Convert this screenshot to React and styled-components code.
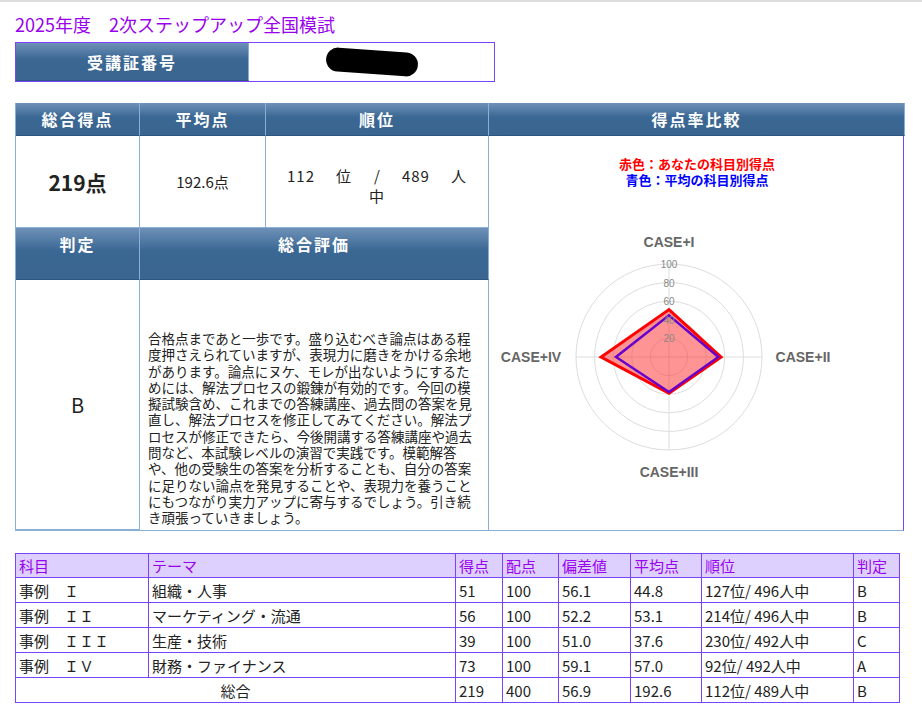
import React from "react";
import styled, { createGlobalStyle } from "styled-components";

const G = createGlobalStyle`
  body { margin: 0; background: #fff; font-family: "Noto Sans CJK JP", "Liberation Sans", sans-serif; }
`;
const Page = styled.div`
  padding: 10px 15px 0 15px; border-top: 2px solid #ddd; width: 892px;
`;
const Title = styled.h1`
  margin: 0 0 6px 0; font-size: 18px; font-weight: normal; color: #9900ee; line-height: 24px;
`;
const IdBar = styled.div`
  display: grid; grid-template-columns: 233px 246px; width: 480px; height: 40px;
  border: 1px solid #7a44ff; box-sizing: border-box;
`;
const HeadCell = styled.div`
  background: linear-gradient(#6e91b8, #3a6793 45%, #3a6590);
  color: #fff; font-weight: bold; font-size: 16px; letter-spacing: 2px;
  display: flex; justify-content: center; align-items: ${p => p.$top ? "flex-start" : "center"};
  padding-top: ${p => p.$top ? "4px" : "0"};
  border-right: 1px solid #8ab0d8; border-bottom: 1px solid #2d5580;
`;
const Blot = styled.div`
  display: flex; align-items: center; justify-content: center;
  & > span { width: 92px; height: 24px; background: #000; border-radius: 12px; transform: rotate(4deg); display: block; }
`;
const Main = styled.div`
  margin-top: 21px; display: grid; width: 889px; box-sizing: border-box;
  grid-template-columns: 124px 126px 223px 416px;
  grid-template-rows: 33px 92px 52px 250px;
  border-left: 1px solid #8ab0d8; border-bottom: 1px solid #8ab0d8; border-right: 1px solid #7a44ff;
`;
const Cell = styled.div`
  border-right: 1px solid #8ab0d8; border-bottom: 1px solid #8ab0d8;
  display: flex; align-items: center; justify-content: center; color: #222;
  font-size: ${p => p.$size || 15}px; font-weight: ${p => p.$bold ? "bold" : "normal"};
`;
const Rank = styled.div`
  width: 180px; font-size: 15px; text-align: justify; text-align-last: center; letter-spacing: 1px;
  line-height: 20px; word-spacing: 16px; padding-top: 8px;
`;
const Eval = styled.div`
  border-right: 1px solid #8ab0d8; padding: 50px 14px 4px 8px; font-size: 13.5px; line-height: 16.3px; color: #222;
`;
const ChartCell = styled.div`
  grid-column: 4; grid-row: 2 / span 3; display: flex; flex-direction: column; align-items: center;
`;
const Legend = styled.div`
  font-size: 13px; font-weight: bold; text-align: center; line-height: 16px;
  color: ${p => p.$c}; margin-top: ${p => p.$first ? "20px" : "0"};
`;
const Table = styled.table`
  margin-top: 22px; border-collapse: collapse; width: 885px; font-size: 15px; color: #222;
  td, th { border: 1px solid #7a44ff; padding: 0 3px; height: 24px; text-align: left; font-weight: normal; }
  th { background: #ddd0ff; color: #9900ee; height: 23px; }
`;

const cx = 180, cy = 139, k = 0.93;
const pts = v => [[0, -v[0]], [v[1], 0], [0, v[2]], [-v[3], 0]].map(([x, y]) => `${cx + x * k},${cy + y * k}`).join(" ");

function Radar() {
  return (
    <svg width="416" height="280" viewBox="0 0 416 280" style={{ marginTop: 30 }}>
      {[20, 40, 60, 80, 100].map(r => <circle key={r} cx={cx} cy={cy} r={r * k} fill="none" stroke="#ddd" />)}
      <line x1={cx} y1={cy - 93} x2={cx} y2={cy + 93} stroke="#ddd" />
      <line x1={cx - 93} y1={cy} x2={cx + 93} y2={cy} stroke="#ddd" />
      <polygon points={pts([51, 56, 39, 73])} fill="rgba(255,60,60,0.55)" stroke="#ff0000" strokeWidth="3" />
      <polygon points={pts([44.8, 53.1, 37.6, 57])} fill="none" stroke="#6600cc" strokeWidth="2.5" />
      {[20, 40, 60, 80, 100].map(r => <text key={r} x={cx} y={cy - r * k + 4} fontSize="10" fill="#888" textAnchor="middle" fontFamily="Liberation Sans">{r}</text>)}
      <g fontFamily="Liberation Sans" fontWeight="bold" fontSize="14" fill="#666" textAnchor="middle">
        <text x={cx} y={cy - 110}>CASE+I</text>
        <text x={cx + 134} y={cy + 5}>CASE+II</text>
        <text x={cx} y={cy + 120}>CASE+III</text>
        <text x={cx - 138} y={cy + 5}>CASE+IV</text>
      </g>
    </svg>
  );
}

const rows = [
  ["事例　Ｉ", "組織・人事", 51, 100, "56.1", "44.8", "127位/ 496人中", "B"],
  ["事例　ＩＩ", "マーケティング・流通", 56, 100, "52.2", "53.1", "214位/ 496人中", "B"],
  ["事例　ＩＩＩ", "生産・技術", 39, 100, "51.0", "37.6", "230位/ 492人中", "C"],
  ["事例　ＩＶ", "財務・ファイナンス", 73, 100, "59.1", "57.0", "92位/ 492人中", "A"],
];

export default function App() {
  return (
    <Page>
      <G />
      <Title>2025年度　2次ステップアップ全国模試</Title>
      <IdBar><HeadCell>受講証番号</HeadCell><Blot><span /></Blot></IdBar>
      <Main>
        <HeadCell>総合得点</HeadCell>
        <HeadCell>平均点</HeadCell>
        <HeadCell>順位</HeadCell>
        <HeadCell>得点率比較</HeadCell>
        <Cell $size={21} $bold>219点</Cell>
        <Cell>192.6点</Cell>
        <Cell><Rank>112 位 / 489 人 中</Rank></Cell>
        <ChartCell>
          <Legend $c="#ff0000" $first>赤色：あなたの科目別得点</Legend>
          <Legend $c="#0000ff">青色：平均の科目別得点</Legend>
          <Radar />
        </ChartCell>
        <HeadCell $top>判定</HeadCell>
        <HeadCell $top style={{ gridColumn: "2 / span 2" }}>総合評価</HeadCell>
        <Cell $size={20}>B</Cell>
        <Eval style={{ gridColumn: "2 / span 2" }}>合格点まであと一歩です。盛り込むべき論点はある程度押さえられていますが、表現力に磨きをかける余地があります。論点にヌケ、モレが出ないようにするためには、解法プロセスの鍛錬が有効的です。今回の模擬試験含め、これまでの答練講座、過去問の答案を見直し、解法プロセスを修正してみてください。解法プロセスが修正できたら、今後開講する答練講座や過去問など、本試験レベルの演習で実践です。模範解答や、他の受験生の答案を分析することも、自分の答案に足りない論点を発見することや、表現力を養うことにもつながり実力アップに寄与するでしょう。引き続き頑張っていきましょう。</Eval>
      </Main>
      <Table>
        <thead>
          <tr>
            <th style={{ width: 126 }}>科目</th><th style={{ width: 300 }}>テーマ</th><th style={{ width: 40 }}>得点</th><th style={{ width: 49 }}>配点</th>
            <th style={{ width: 65 }}>偏差値</th><th style={{ width: 64 }}>平均点</th><th style={{ width: 145 }}>順位</th><th>判定</th>
          </tr>
        </thead>
        <tbody>
          {rows.map(r => <tr key={r[0]}>{r.map((c, i) => <td key={i}>{c}</td>)}</tr>)}
          <tr><td colSpan={2} style={{ textAlign: "center" }}>総合</td><td>219</td><td>400</td><td>56.9</td><td>192.6</td><td>112位/ 489人中</td><td>B</td></tr>
        </tbody>
      </Table>
    </Page>
  );
}
